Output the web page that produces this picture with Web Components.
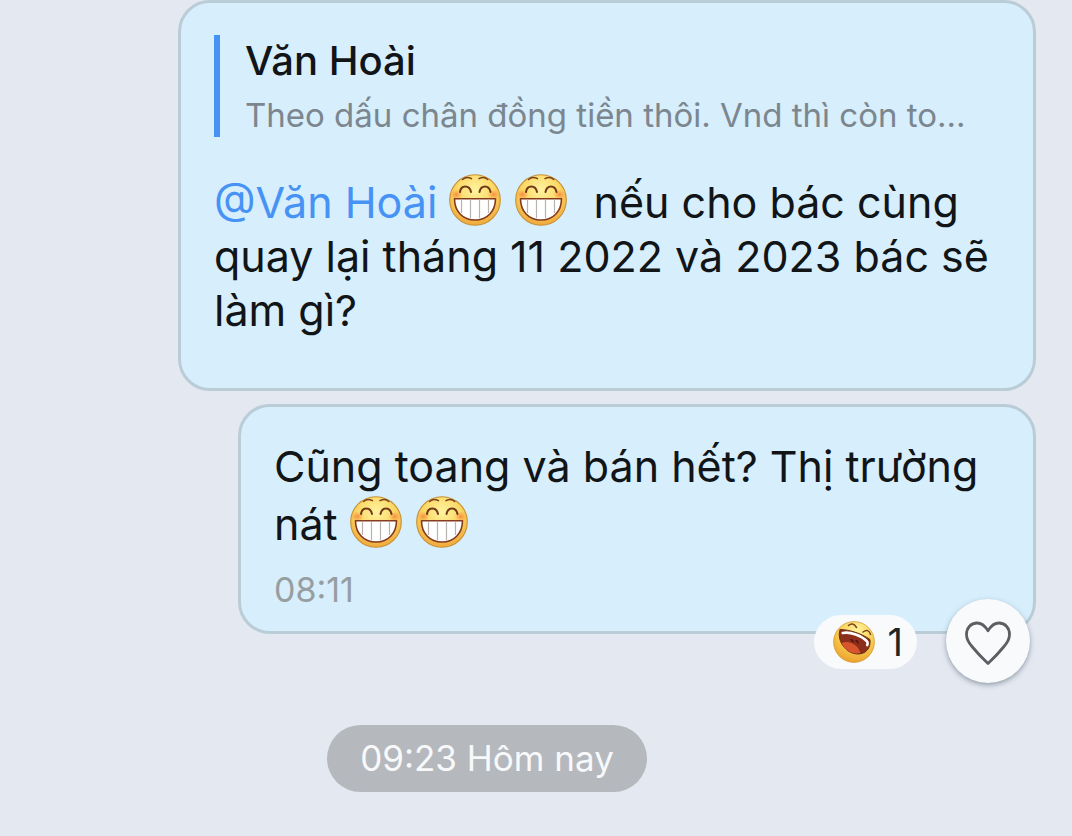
<!DOCTYPE html>
<html lang="vi">
<head>
<meta charset="utf-8">
<meta name="viewport" content="width=device-width, initial-scale=1">
<title>Trò chuyện</title>
<style>
  body { margin: 0; background: #e3e8f1; font-family: Inter, "Noto Sans", sans-serif; color: #111517; }
</style>
</head>
<body>
<chat-thread>
  <chat-bubble>
    <quoted-message slot="quote" author="Văn Hoài">Theo dấu chân đồng tiền thôi. Vnd thì còn to...</quoted-message>
    <user-mention name="Văn Hoài"></user-mention> <grin-emoji></grin-emoji><grin-emoji></grin-emoji> nếu cho bác cùng quay lại tháng 11 2022 và 2023 bác sẽ làm gì?
  </chat-bubble>
  <chat-bubble class="short" time="08:11">Cũng toang và bán hết? Thị trường nát <grin-emoji></grin-emoji><grin-emoji></grin-emoji><message-reactions slot="reactions" count="1"></message-reactions></chat-bubble>
  <time-divider>09:23 Hôm nay</time-divider>
</chat-thread>

<script>
  class ChatElement extends HTMLElement {
    constructor() {
      super();
      this.attachShadow({ mode: "open" }).innerHTML = this.constructor.markup;
    }
    put(selector, text) {
      this.shadowRoot.querySelector(selector).textContent = text;
    }
  }

  customElements.define("chat-thread", class extends ChatElement {
    static markup = `
      <style>
        :host { display: flex; flex-direction: column; gap: 13px; padding: 0 36px 44px 178px; }
        ::slotted(.short) { margin-left: 60px; --line: 58px; --pad-top: 30px; --pad-bottom: 21px; }
      </style>
      <slot></slot>`;
  });

  customElements.define("chat-bubble", class extends ChatElement {
    static markup = `
      <style>
        :host { display: block; position: relative; box-sizing: border-box; border: 3px solid #bacdd7;
          border-radius: 32px; background: #d7eefc; padding: var(--pad-top, 32px) 33px var(--pad-bottom, 51px); }
        .text { font-size: 43px; line-height: var(--line, 54px); margin: 0; }
        time { display: block; margin-top: 17px; font-size: 34px; line-height: 40px; color: #979ea1; }
        time[hidden] { display: none; }
        ::slotted([slot="quote"]) { margin-bottom: 38px; }
        ::slotted([slot="reactions"]) { position: absolute; right: 3px; bottom: -52px; }
      </style>
      <slot name="quote"></slot>
      <p class="text"><slot></slot></p>
      <time hidden></time>
      <slot name="reactions"></slot>`;
    connectedCallback() {
      if (this.hasAttribute("time")) {
        this.put("time", this.getAttribute("time"));
        this.shadowRoot.querySelector("time").hidden = false;
      }
    }
  });

  customElements.define("quoted-message", class extends ChatElement {
    static markup = `
      <style>
        :host { display: flow-root; border-left: 6px solid #4792f5; padding-left: 25px; }
        strong { display: block; font-size: 40px; line-height: 52px; font-weight: 500; }
        p { margin: 6px 0 0; font-size: 33px; line-height: 44px; color: #7b868f;
          white-space: nowrap; overflow: hidden; text-overflow: ellipsis; }
      </style>
      <strong></strong>
      <p><slot></slot></p>`;
    connectedCallback() { this.put("strong", this.getAttribute("author")); }
  });

  customElements.define("user-mention", class extends ChatElement {
    static markup = `
      <style>
        :host { display: inline; }
        a { color: #4792f5; text-decoration: none; }
      </style><a href="#"></a>`;
    connectedCallback() { this.put("a", "@" + this.getAttribute("name")); }
  });

  customElements.define("grin-emoji", class extends ChatElement {
    static markup = `
      <style>
        :host { display: inline-block; width: 52px; height: 52px; margin-right: 14px; vertical-align: -8px; line-height: 0; margin-top: -2px; }
        svg { width: 100%; height: 100%; }
      </style>
      <svg viewBox="0 0 52 52" fill="none" role="img" aria-label="cười">
        <defs>
          <radialGradient id="face" cx=".5" cy=".3" r=".72">
            <stop offset="0" stop-color="#fff3a0"/><stop offset=".5" stop-color="#fbd865"/><stop offset="1" stop-color="#efa638"/>
          </radialGradient>
          <radialGradient id="blush"><stop offset="0" stop-color="#f77b3c" stop-opacity=".75"/><stop offset="1" stop-color="#f77b3c" stop-opacity="0"/></radialGradient>
        </defs>
        <circle cx="26" cy="26" r="25.3" fill="url(#face)" stroke="#c99032" stroke-width="1.1"/>
        <ellipse cx="7.5" cy="20.5" rx="6" ry="5" fill="url(#blush)"/>
        <ellipse cx="44.5" cy="20.5" rx="6" ry="5" fill="url(#blush)"/>
        <path d="M13.5 5.5Q17.5 1.8 22.5 4.7M30 4.7Q35 1.8 38.8 5.5" stroke="#7b421a" stroke-width="1.5" stroke-linecap="round"/>
        <path d="M11 18C12 10.8 20.5 10.8 22 18M30.5 18C32 10.800 40 10.800 41.5 18" stroke="#713819" stroke-width="2" stroke-linecap="round"/>
        <path d="M5.500 24.7H46.500C46.500 37 38.500 46 26 46S5.500 37 5.500 24.7Z" fill="#fff" stroke="#843a1c" stroke-width="1.6" stroke-linejoin="round"/>
        <path d="M12.500 25.500V39M21.500 25.500V44.500M30.500 25.500V44.500M39.500 25.500V39" stroke="#b9b3b0" stroke-width="1.2"/>
      </svg>`;
  });

  customElements.define("message-reactions", class extends ChatElement {
    static markup = `
      <style>
        :host { display: flex; align-items: center; gap: 29px; }
        button { font: inherit; color: #202426; border: 0; margin: 0; background: #f9fafc; }
        .count { display: flex; align-items: center; gap: 13px; height: 54px; border-radius: 27px;
          padding: 0 14px 0 19px; margin-top: 2px; font-size: 38px; line-height: 40px; }
        .count svg { width: 42px; height: 42px; }
        .heart { display: grid; place-items: center; width: 84px; height: 84px; padding: 0;
          border-radius: 50%; box-shadow: 0 2px 5px rgb(70 85 100 / .5); }
        .heart svg { width: 46px; height: 44px; margin-top: 4px; }
      </style>
      <button class="count" aria-label="Cảm xúc">
        <svg viewBox="0 0 42 42" fill="none" aria-hidden="true">
          <defs>
            <radialGradient id="laugh" cx=".58" cy=".2" r=".85">
              <stop offset="0" stop-color="#fff29a"/><stop offset=".55" stop-color="#f9cd4c"/><stop offset="1" stop-color="#e99c2c"/>
            </radialGradient>
          </defs>
          <circle cx="21" cy="21" r="20.4" fill="url(#laugh)" stroke="#d79935" stroke-width=".8"/>
          <path d="M15.5 4.500Q20 .5 23.500 6.500M30 11Q35.500 7 37.500 13.500" stroke="#79431c" stroke-width="1.5" stroke-linecap="round"/>
          <path d="M7 8.500C15 8.500 28 12 37 18.500C38 27 33 33 25 33C13 33 3.500 20 7 8.500Z" fill="#8c2e1b" stroke="#65301a" stroke-width="1"/>
          <path d="M9.700 12C17 10.500 29 14.500 34.500 21C34.800 22.500 34.700 23.300 34.200 24.200" stroke="#fff" stroke-width="2.600" stroke-linecap="round" stroke-linejoin="round"/>
          <path d="M8.500 22.500C14 19 24 22 27.500 32C19 34 12 29 8.500 22.500Z" fill="#d6552c"/>
          <path d="M17.500 19Q19.500 18 20 21.500M22.500 20Q24.500 19 25 22.500" stroke="#511610" stroke-width="1.5"/>
        </svg>
        <span></span>
      </button>
      <button class="heart" aria-label="Thích">
        <svg viewBox="0 0 46 44" fill="none" stroke="#5d5f62" stroke-width="2.8" stroke-linejoin="round" aria-hidden="true">
          <path d="M23 9.800C19.500 4 15.500 2 12 2C6 2 1.500 7 1.500 13.500C1.500 18 3.500 21.500 7 25.500C11.500 31 16.500 36.500 23 42.500C29.500 36.500 34.500 31 39 25.500C42.500 21.500 44.500 18 44.500 13.500C44.500 7 40 2 34 2C30.500 2 26.500 4 23 9.800Z"/>
        </svg>
      </button>`;
    connectedCallback() { this.put("span", this.getAttribute("count")); }
  });

  customElements.define("time-divider", class extends ChatElement {
    static markup = `
      <style>
        :host { display: flex; justify-content: center; margin: 78px 62px 0 -178px; }
        time { background: #b5b8bd; color: #f8f9fb; border-radius: 34px; padding: 12px 33px; font-size: 35px; line-height: 43px; }
      </style>
      <time><slot></slot></time>`;
  });
</script>
</body>
</html>
